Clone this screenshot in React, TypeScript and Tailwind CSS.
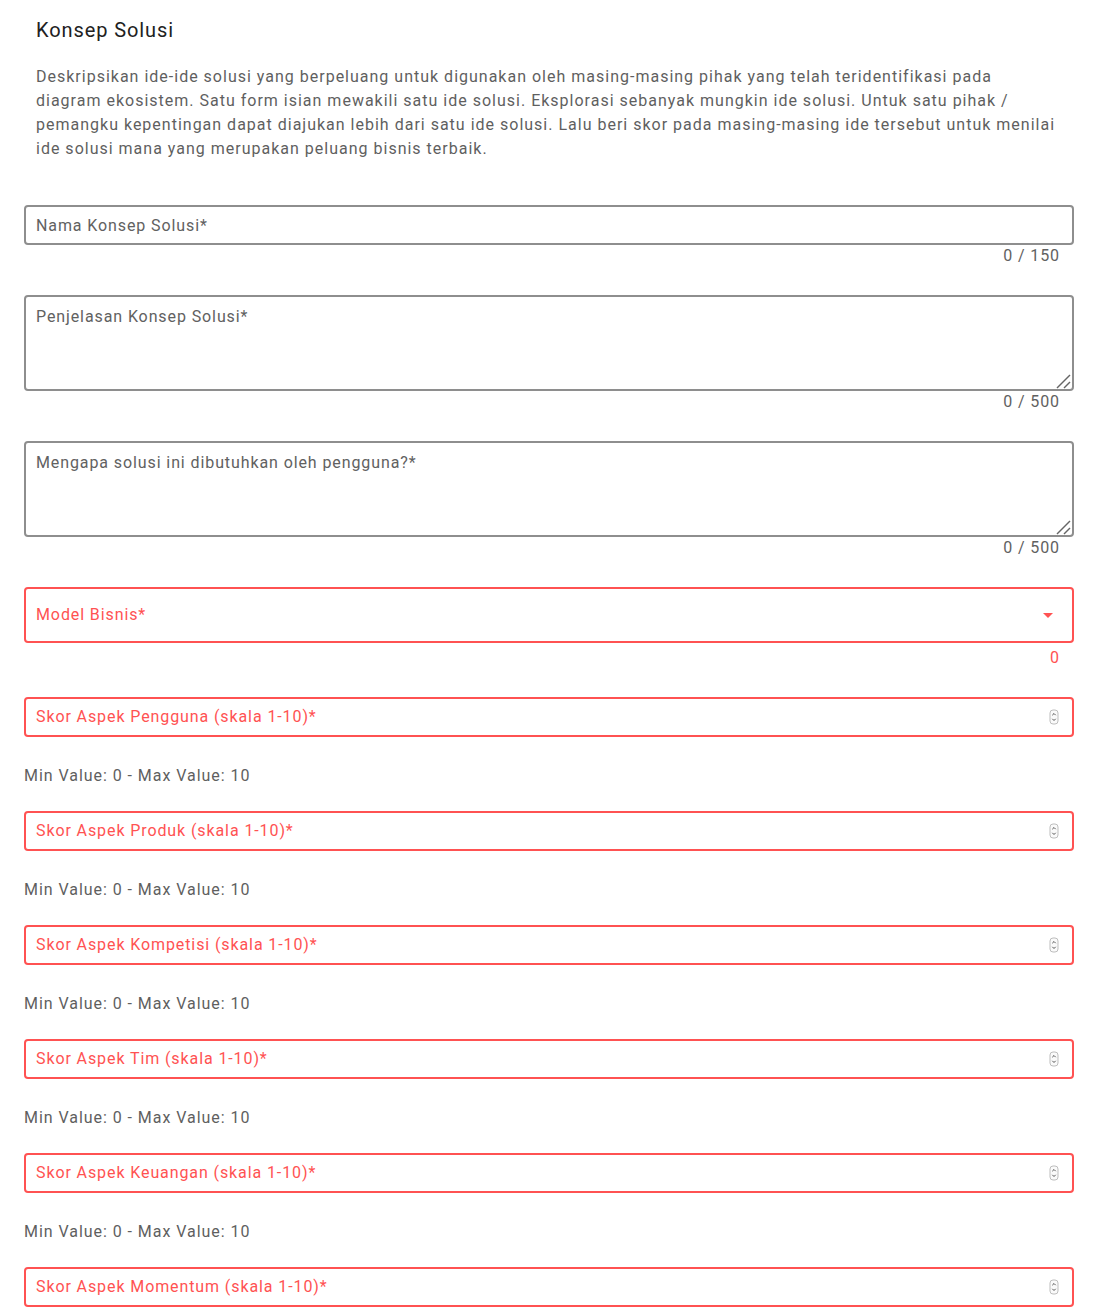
import React from 'react';

const scores = [
  'Skor Aspek Pengguna (skala 1-10)*',
  'Skor Aspek Produk (skala 1-10)*',
  'Skor Aspek Kompetisi (skala 1-10)*',
  'Skor Aspek Tim (skala 1-10)*',
  'Skor Aspek Keuangan (skala 1-10)*',
  'Skor Aspek Momentum (skala 1-10)*',
];

const Spinner: React.FC = () => (
  <svg width="10" height="16" viewBox="0 0 10 16" className="shrink-0">
    <rect x="1" y="1" width="8" height="14" rx="3" fill="#fafafa" stroke="#bdbdbd" strokeWidth="1" />
    <path d="M3.3 6.2 L5 4.5 L6.7 6.2" fill="none" stroke="#555" strokeWidth="1" />
    <path d="M3.3 9.8 L5 11.5 L6.7 9.8" fill="none" stroke="#555" strokeWidth="1" />
  </svg>
);

const Grip: React.FC = () => (
  <svg width="16" height="16" viewBox="0 0 16 16" className="pointer-events-none absolute bottom-[1px] right-[2px]">
    <path d="M1 14 L14 1" stroke="#666" strokeWidth="1.5" />
    <path d="M8 14 L14 8" stroke="#666" strokeWidth="1.5" />
  </svg>
);

const Counter: React.FC<{ text: string; red?: boolean }> = ({ text, red }) => (
  <div className={`h-[22px] pr-[14px] text-right text-base leading-[22px] tracking-[0.9px] ${red ? 'text-[#ff5252]' : 'text-[#616161]'}`}>
    {text}
  </div>
);

const TextArea: React.FC<{ placeholder: string }> = ({ placeholder }) => (
  <div className="relative">
    <textarea
      placeholder={placeholder}
      className="block h-24 w-full resize-none rounded border-2 border-[#8e8e8e] px-[10px] pt-[8px] text-base leading-6 tracking-[0.9px] text-[#212121] outline-none placeholder:text-[#616161]"
    />
    <Grip />
  </div>
);

const App: React.FC = () => {
  return (
    <div className="min-h-[1314px] bg-white px-6 pb-6 font-['Roboto','Liberation_Sans',sans-serif]">
      <h2 className="px-3 pt-4 text-xl leading-7 tracking-[0.9px] text-[#212121]">Konsep Solusi</h2>
      <p className="mt-[21px] whitespace-nowrap px-3 text-base leading-6 tracking-[1px] text-[#5f5f5f]">
        Deskripsikan ide-ide solusi yang berpeluang untuk digunakan oleh masing-masing pihak yang telah teridentifikasi pada
        <br />
        diagram ekosistem. Satu form isian mewakili satu ide solusi. Eksplorasi sebanyak mungkin ide solusi. Untuk satu pihak /
        <br />
        pemangku kepentingan dapat diajukan lebih dari satu ide solusi. Lalu beri skor pada masing-masing ide tersebut untuk menilai
        <br />
        ide solusi mana yang merupakan peluang bisnis terbaik.
      </p>

      <div className="mt-[44px]">
        <input
          placeholder="Nama Konsep Solusi*"
          className="block h-10 w-full rounded border-2 border-[#8e8e8e] px-[10px] text-base tracking-[0.9px] text-[#212121] outline-none placeholder:text-[#616161]"
        />
        <Counter text="0 / 150" />
      </div>

      <div className="mt-[28px]">
        <TextArea placeholder="Penjelasan Konsep Solusi*" />
        <Counter text="0 / 500" />
      </div>

      <div className="mt-[28px]">
        <TextArea placeholder="Mengapa solusi ini dibutuhkan oleh pengguna?*" />
        <Counter text="0 / 500" />
      </div>

      <div className="mt-[28px]">
        <div className="flex h-14 items-center justify-between rounded border-2 border-[#ff5252] pl-[10px] pr-[19px]">
          <span className="text-base tracking-[0.9px] text-[#ff5252]">Model Bisnis*</span>
          <svg width="10" height="5" viewBox="0 0 10 5">
            <path d="M0 0 L10 0 L5 5 Z" fill="#ff5252" />
          </svg>
        </div>
        <div className="mt-1">
          <Counter text="0" red />
        </div>
      </div>

      <div className="mt-[28px] flex flex-col">
        {scores.map((label) => (
          <div key={label}>
            <div className="flex h-10 items-center justify-between rounded border-2 border-[#ff5252] pl-[10px] pr-[13px]">
              <span className="text-base tracking-[0.9px] text-[#ff5252]">{label}</span>
              <Spinner />
            </div>
            <div className="mb-[23px] mt-[27px] h-6 text-base leading-6 tracking-[0.95px] text-[#5f5f5f]">Min Value: 0 - Max Value: 10</div>
          </div>
        ))}
      </div>
    </div>
  );
};

export default App;
